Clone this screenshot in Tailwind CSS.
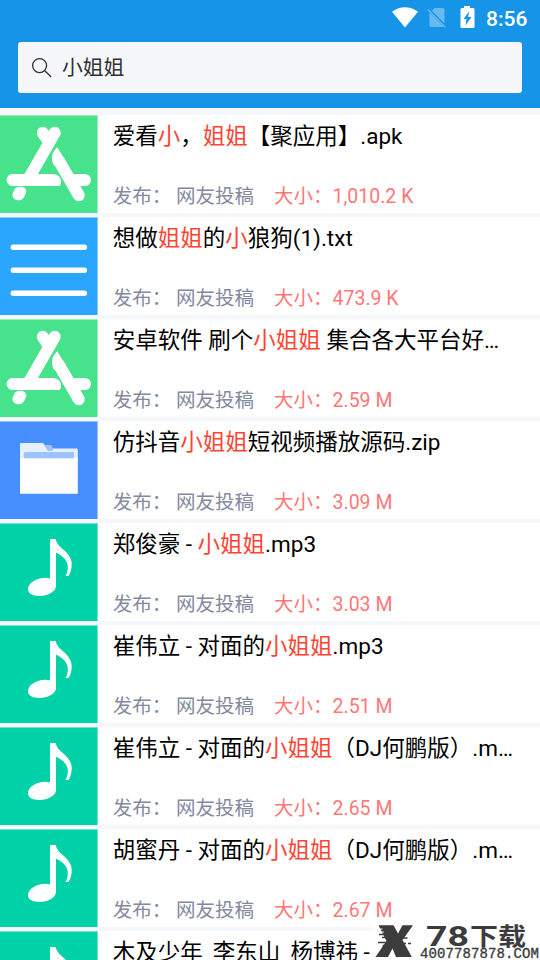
<!DOCTYPE html>
<html lang="zh-CN">
<head>
<meta charset="utf-8">
<title>小姐姐</title>
<script src="https://cdn.jsdelivr.net/npm/@tailwindcss/browser@4"></script>
</head>
<body class="w-[540px] h-[960px] overflow-hidden bg-[#f6f7fa] font-[Roboto,'Noto_Sans_CJK_SC',sans-serif] text-black">
<svg class="hidden">
  <symbol id="app" viewBox="0 0 98 98">
    <g fill="none" stroke="#fff" stroke-width="12" stroke-linecap="round">
      <path d="M42.800 17.800 49 27"/>
      <path d="M78.800 80.300 59 46"/>
      <path d="M72 65h13"/>
    </g>
    <path fill="#fff" d="M49.500 14.800a6 6 0 0 1 10.400 6L37.800 59.300 24.300 59.300 42 28.500z"/>
    <path fill="#fff" d="M12.500 59H52c6 0 9 3.500 9 7.500 0 2-.5 3.500-1.500 4.500h-47a6 6 0 0 1 0-12zM57.300 32.300c-6 5.500-6.500 11-3.500 18.300l6-.6 4.500-6z"/>
    <path fill="#fff" d="M15 73.500c3-2.300 7-2.300 10-.3 1.500 1.500 1.600 3.500.8 5.300l-2 4c-4 6-13.500 1.500-11-4.500z"/>
  </symbol>
  <symbol id="txt" viewBox="0 0 98 98">
    <path d="M13.300 30.300H84.400M13.300 53.300H84.400M13.300 76.300H84.400" stroke="#fff" stroke-width="5.400" stroke-linecap="round"/>
  </symbol>
  <symbol id="zip" viewBox="0 0 98 98">
    <path fill="#e6f0ff" d="M21 22h22l2 2.500 2.500 4 2.500 1h1.500l1.500-1.800H77q.8 0 .8 1V40H20V23q0-1 1-1z"/>
    <path fill="#9dc3ff" d="M44.500 24H51l2.500 3.700-1 2h-4.500l-1.500-2zM53 27h24v1H53zM25 31h48q1 0 1 1v6H23.700v-5q0-1.500 1.300-2z"/>
    <path fill="#fff" d="M20 37.300h57.800V72q0 .8-.8.800H20.800q-.8 0-.8-.8z"/>
  </symbol>
  <symbol id="mp3" viewBox="0 0 98 98">
    <path fill="#fff" d="M50 16h5.700c.5 4 3.500 7 7.600 10.500C69 31.500 72 36 71.700 42c-.2 4.500-1.200 8-3.200 11h-3c2-3.500 2.600-7 2.200-10.500-.6-5.500-5.500-10-11.700-12.700V63c0 5.500-8 10-16.500 10C32 73 28 70.300 28 66.300c0-6.300 8.500-11.500 17-11.500 2 0 3.700.3 5 .8z"/>
  </symbol>
</svg>

<header class="h-[108px] bg-[#1695e8]">
  <div class="h-[42px] flex items-start justify-end pr-[12px] text-white">
    <svg class="w-[26px] h-[21px] mt-[7px] mr-[9px]" viewBox="0 0 26 21"><path fill="#fff" d="M0 4.700Q13-4 26 4.700L13 20.500z"/></svg>
    <svg class="w-[20px] h-[21px] mt-[7px] mr-[13px]" viewBox="0 0 20 21"><path fill="#fff" fill-opacity=".35" d="M7.500 1H16q1.500 0 1.500 1.500V16.500L4.800 3.700zM2.500 5.500 16.300 19.500 16 20H4q-1.500 0-1.500-1.500z"/><path d="M.8 2.500 18.500 20.500" stroke="#fff" stroke-opacity=".35" stroke-width="1.300"/></svg>
    <svg class="w-[15px] h-[22px] mt-[6px] mr-[11px]" viewBox="0 0 15 22"><path fill="#fff" d="M4 0h6v2h3q1.500 0 1.500 1.500V21q0 1-1 1h-12q-1 0-1-1V3.500Q.5 2 2 2h2z"/><path fill="#1695e8" d="M9 5.500 3.500 13H6.500L5.500 19.500 11.500 11H8.200z"/></svg>
    <span class="w-[42px] mt-[6px] text-[21px] leading-[26px] font-medium whitespace-nowrap">8:56</span>
  </div>
  <div class="mx-[18px] h-[51px] rounded-[3px] bg-[#f6f7fa] flex items-center pl-[13px]">
    <svg class="w-[22px] h-[22px]" viewBox="0 0 22 22" fill="none" stroke="#303234" stroke-width="1.300"><circle cx="8.600" cy="8.600" r="7"/><path d="m13.700 13.700 6.500 6.300"/></svg>
    <span class="ml-[9px] text-[20.800px] leading-[28px] text-[#303234]">小姐姐</span>
  </div>
</header>

<main class="pt-[7px] flex flex-col gap-[4px]">
  <article class="h-[98px] shrink-0 bg-white flex">
    <svg class="w-[98px] h-[98px] shrink-0 bg-[#47e28c] shadow-[inset_-1px_1px_0_rgba(255,255,255,0.45)]"><use href="#app"/></svg>
    <div class="ml-[14.700px] pt-[5px]">
      <h2 class="h-[32px] text-[22.500px] leading-[32px] whitespace-pre">爱看<span class="text-[#ff4433]">小</span>，<span class="text-[#ff4433]">姐姐</span>【聚应用】.apk</h2>
      <p class="mt-[31px] h-[28px] text-[19.500px] leading-[28px] whitespace-pre text-[#8489a0]">发布： 网友投稿<span class="ml-[20px] text-[#ff7777]">大小：1,010.2 K</span></p>
    </div>
  </article>
  <article class="h-[98px] shrink-0 bg-white flex">
    <svg class="w-[98px] h-[98px] shrink-0 bg-[#2ba6ff] shadow-[inset_-1px_1px_0_rgba(255,255,255,0.45)]"><use href="#txt"/></svg>
    <div class="ml-[14.700px] pt-[5px]">
      <h2 class="h-[32px] text-[22.500px] leading-[32px] whitespace-pre">想做<span class="text-[#ff4433]">姐姐</span>的<span class="text-[#ff4433]">小</span>狼狗(1).txt</h2>
      <p class="mt-[31px] h-[28px] text-[19.500px] leading-[28px] whitespace-pre text-[#8489a0]">发布： 网友投稿<span class="ml-[20px] text-[#ff7777]">大小：473.9 K</span></p>
    </div>
  </article>
  <article class="h-[98px] shrink-0 bg-white flex">
    <svg class="w-[98px] h-[98px] shrink-0 bg-[#47e28c] shadow-[inset_-1px_1px_0_rgba(255,255,255,0.45)]"><use href="#app"/></svg>
    <div class="ml-[14.700px] pt-[5px]">
      <h2 class="h-[32px] text-[22.500px] leading-[32px] whitespace-pre">安卓软件 刷个<span class="text-[#ff4433]">小姐姐</span> 集合各大平台好…</h2>
      <p class="mt-[31px] h-[28px] text-[19.500px] leading-[28px] whitespace-pre text-[#8489a0]">发布： 网友投稿<span class="ml-[20px] text-[#ff7777]">大小：2.59 M</span></p>
    </div>
  </article>
  <article class="h-[98px] shrink-0 bg-white flex">
    <svg class="w-[98px] h-[98px] shrink-0 bg-[#478fff] shadow-[inset_-1px_1px_0_rgba(255,255,255,0.45)]"><use href="#zip"/></svg>
    <div class="ml-[14.700px] pt-[5px]">
      <h2 class="h-[32px] text-[22.500px] leading-[32px] whitespace-pre">仿抖音<span class="text-[#ff4433]">小姐姐</span>短视频播放源码.zip</h2>
      <p class="mt-[31px] h-[28px] text-[19.500px] leading-[28px] whitespace-pre text-[#8489a0]">发布： 网友投稿<span class="ml-[20px] text-[#ff7777]">大小：3.09 M</span></p>
    </div>
  </article>
  <article class="h-[98px] shrink-0 bg-white flex">
    <svg class="w-[98px] h-[98px] shrink-0 bg-[#00d1a7] shadow-[inset_-1px_1px_0_rgba(255,255,255,0.45)]"><use href="#mp3"/></svg>
    <div class="ml-[14.700px] pt-[5px]">
      <h2 class="h-[32px] text-[22.500px] leading-[32px] whitespace-pre">郑俊豪 - <span class="text-[#ff4433]">小姐姐</span>.mp3</h2>
      <p class="mt-[31px] h-[28px] text-[19.500px] leading-[28px] whitespace-pre text-[#8489a0]">发布： 网友投稿<span class="ml-[20px] text-[#ff7777]">大小：3.03 M</span></p>
    </div>
  </article>
  <article class="h-[98px] shrink-0 bg-white flex">
    <svg class="w-[98px] h-[98px] shrink-0 bg-[#00d1a7] shadow-[inset_-1px_1px_0_rgba(255,255,255,0.45)]"><use href="#mp3"/></svg>
    <div class="ml-[14.700px] pt-[5px]">
      <h2 class="h-[32px] text-[22.500px] leading-[32px] whitespace-pre">崔伟立 - 对面的<span class="text-[#ff4433]">小姐姐</span>.mp3</h2>
      <p class="mt-[31px] h-[28px] text-[19.500px] leading-[28px] whitespace-pre text-[#8489a0]">发布： 网友投稿<span class="ml-[20px] text-[#ff7777]">大小：2.51 M</span></p>
    </div>
  </article>
  <article class="h-[98px] shrink-0 bg-white flex">
    <svg class="w-[98px] h-[98px] shrink-0 bg-[#00d1a7] shadow-[inset_-1px_1px_0_rgba(255,255,255,0.45)]"><use href="#mp3"/></svg>
    <div class="ml-[14.700px] pt-[5px]">
      <h2 class="h-[32px] text-[22.500px] leading-[32px] whitespace-pre">崔伟立 - 对面的<span class="text-[#ff4433]">小姐姐</span>（DJ何鹏版）.m…</h2>
      <p class="mt-[31px] h-[28px] text-[19.500px] leading-[28px] whitespace-pre text-[#8489a0]">发布： 网友投稿<span class="ml-[20px] text-[#ff7777]">大小：2.65 M</span></p>
    </div>
  </article>
  <article class="h-[98px] shrink-0 bg-white flex">
    <svg class="w-[98px] h-[98px] shrink-0 bg-[#00d1a7] shadow-[inset_-1px_1px_0_rgba(255,255,255,0.45)]"><use href="#mp3"/></svg>
    <div class="ml-[14.700px] pt-[5px]">
      <h2 class="h-[32px] text-[22.500px] leading-[32px] whitespace-pre">胡蜜丹 - 对面的<span class="text-[#ff4433]">小姐姐</span>（DJ何鹏版）.m…</h2>
      <p class="mt-[31px] h-[28px] text-[19.500px] leading-[28px] whitespace-pre text-[#8489a0]">发布： 网友投稿<span class="ml-[20px] text-[#ff7777]">大小：2.67 M</span></p>
    </div>
  </article>
  <article class="h-[29px] shrink-0 bg-white flex overflow-hidden">
    <svg class="w-[98px] h-[98px] shrink-0 bg-[#00d1a7] shadow-[inset_-1px_1px_0_rgba(255,255,255,0.45)]"><use href="#mp3" width="98" height="98"/></svg>
    <div class="ml-[14.700px] pt-[5px]">
      <h2 class="h-[32px] text-[22.500px] leading-[32px] whitespace-pre">木及少年_李东山_杨博祎 -</h2>
    </div>
  </article>
</main>

<svg class="absolute left-[373px] top-[922px] w-[167px] h-[38px] bg-white" viewBox="0 2 167 38" fill="#3c3c3c">
  <path d="M5.500 5.200H20.500L25 13.500 29.500 5.200H40L29.500 20 38.800 37H23L19.500 28.500 15 37H2.500L13.500 21z"/>
  <path d="M6 14.500h6M9 17.500h4M5 22.500h9M9.500 25.500h4M30 18h4.500M30 23.500h3M35 23.500h3" stroke="#3c3c3c" stroke-width="1.300"/>
  <path d="M4.500 9h5M7 12h4" stroke="#fff" stroke-width=".9"/>
  <g font-family="Roboto,'Noto Sans CJK SC',sans-serif">
    <text x="53" y="25.500" font-size="28" font-weight="700" textLength="43" lengthAdjust="spacingAndGlyphs">78</text>
    <text x="97" y="24.800" font-size="24" font-weight="700" textLength="56" lengthAdjust="spacingAndGlyphs">下载</text>
  </g>
  <text x="47" y="37.500" font-family="'Liberation Mono',monospace" font-size="14" stroke="#3c3c3c" stroke-width=".35" textLength="119" lengthAdjust="spacing">4007787878.COM</text>
</svg>
</body>
</html>
